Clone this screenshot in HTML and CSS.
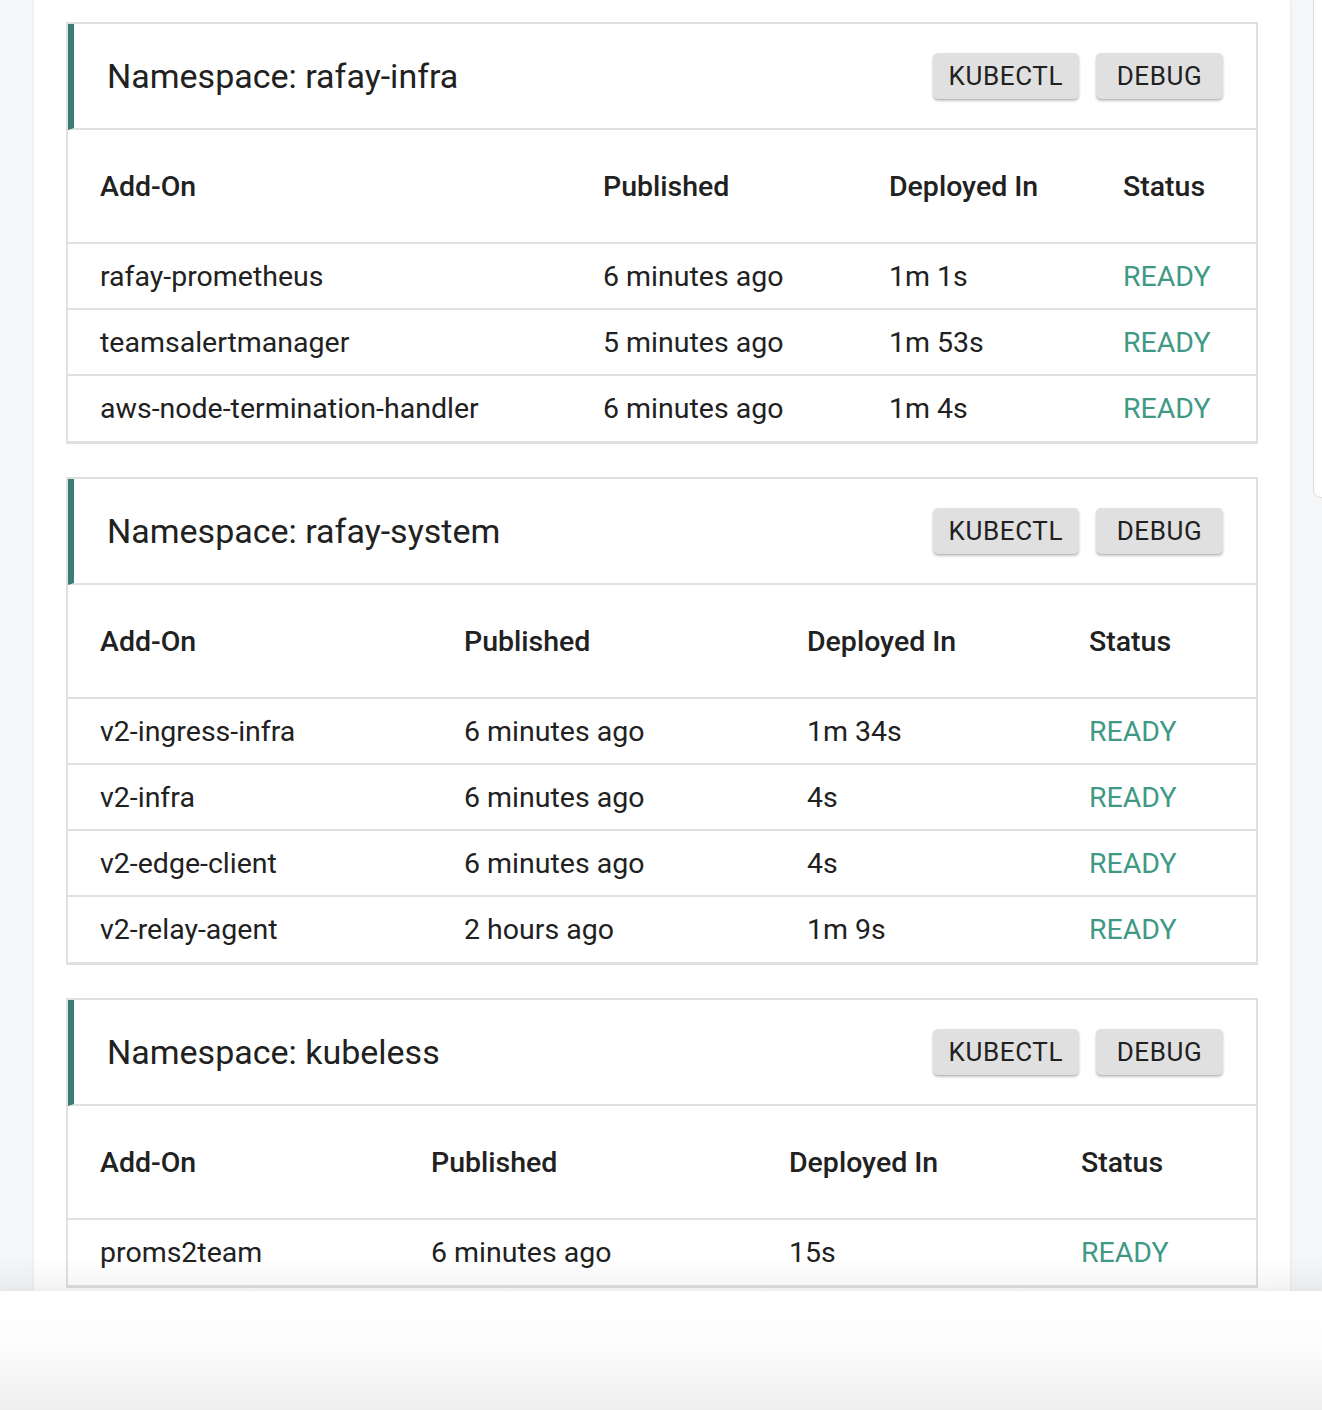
FILE: index.html
```html
<!DOCTYPE html>
<html lang="en">
<head>
<meta charset="utf-8">
<title>Add-Ons by Namespace</title>
<link rel="stylesheet" href="styles.css">
</head>
<body>
<div class="screen">
  <div class="viewport">
    <div class="side-popup"></div>
    <main class="panel">

      <section class="ns-card">
        <header class="ns-head">
          <h2 class="ns-title">Namespace: rafay-infra</h2>
          <div class="ns-actions">
            <button class="btn">KUBECTL</button>
            <button class="btn">DEBUG</button>
          </div>
        </header>
        <table class="addons t-infra">
          <colgroup><col class="c1"><col class="c2"><col class="c3"><col class="c4"></colgroup>
          <thead>
            <tr><th>Add-On</th><th>Published</th><th>Deployed In</th><th>Status</th></tr>
          </thead>
          <tbody>
            <tr><td>rafay-prometheus</td><td>6 minutes ago</td><td>1m 1s</td><td class="ready">READY</td></tr>
            <tr><td>teamsalertmanager</td><td>5 minutes ago</td><td>1m 53s</td><td class="ready">READY</td></tr>
            <tr><td>aws-node-termination-handler</td><td>6 minutes ago</td><td>1m 4s</td><td class="ready">READY</td></tr>
          </tbody>
        </table>
      </section>

      <section class="ns-card">
        <header class="ns-head">
          <h2 class="ns-title">Namespace: rafay-system</h2>
          <div class="ns-actions">
            <button class="btn">KUBECTL</button>
            <button class="btn">DEBUG</button>
          </div>
        </header>
        <table class="addons t-system">
          <colgroup><col class="c1"><col class="c2"><col class="c3"><col class="c4"></colgroup>
          <thead>
            <tr><th>Add-On</th><th>Published</th><th>Deployed In</th><th>Status</th></tr>
          </thead>
          <tbody>
            <tr><td>v2-ingress-infra</td><td>6 minutes ago</td><td>1m 34s</td><td class="ready">READY</td></tr>
            <tr><td>v2-infra</td><td>6 minutes ago</td><td>4s</td><td class="ready">READY</td></tr>
            <tr><td>v2-edge-client</td><td>6 minutes ago</td><td>4s</td><td class="ready">READY</td></tr>
            <tr><td>v2-relay-agent</td><td>2 hours ago</td><td>1m 9s</td><td class="ready">READY</td></tr>
          </tbody>
        </table>
      </section>

      <section class="ns-card">
        <header class="ns-head">
          <h2 class="ns-title">Namespace: kubeless</h2>
          <div class="ns-actions">
            <button class="btn">KUBECTL</button>
            <button class="btn">DEBUG</button>
          </div>
        </header>
        <table class="addons t-kubeless">
          <colgroup><col class="c1"><col class="c2"><col class="c3"><col class="c4"></colgroup>
          <thead>
            <tr><th>Add-On</th><th>Published</th><th>Deployed In</th><th>Status</th></tr>
          </thead>
          <tbody>
            <tr><td>proms2team</td><td>6 minutes ago</td><td>15s</td><td class="ready">READY</td></tr>
          </tbody>
        </table>
      </section>

    </main>
  </div>
  <div class="bottom-sheet"></div>
</div>
</body>
</html>
```

FILE: styles.css
```css
* { box-sizing: border-box; }

html, body {
  margin: 0;
  padding: 0;
  background: #ffffff;
}

body {
  font-family: Roboto, "Liberation Sans", Arial, sans-serif;
  color: #212121;
}

.screen {
  width: 1322px;
  height: 1410px;
  display: flex;
  flex-direction: column;
  overflow: hidden;
}

.viewport {
  position: relative;
  height: 1291px;
  flex: 0 0 1291px;
  background: #f5f6f8;
  padding: 0 32px 0 34px;
  overflow: hidden;
}

.viewport::after {
  content: "";
  position: absolute;
  left: 0;
  right: 0;
  bottom: 0;
  height: 34px;
  background: linear-gradient(to bottom, rgba(0,0,0,0), rgba(0,0,0,0.045));
  pointer-events: none;
}

.side-popup {
  position: absolute;
  top: -10px;
  left: 1313px;
  width: 40px;
  height: 508px;
  background: #ffffff;
  border: 1px solid #dcdcdc;
  border-radius: 0 0 0 8px;
}

.panel {
  background: #ffffff;
  height: 100%;
  padding: 22px 32px 0 32px;
  box-shadow: 0 0 3px rgba(0,0,0,0.10);
  display: flex;
  flex-direction: column;
  gap: 33px;
}

.ns-card {
  border: 2px solid #e0e0e0;
  border-bottom-width: 3px;
  background: #ffffff;
}

.ns-head {
  display: flex;
  align-items: center;
  justify-content: space-between;
  height: 106px;
  border-left: 6px solid #3a7d78;
  border-bottom: 2px solid #e0e0e0;
  padding: 0 33px 0 33px;
}

.ns-title {
  margin: 0;
  font-size: 34px;
  font-weight: 400;
  color: #212121;
}

.ns-actions {
  display: flex;
  gap: 17px;
}

.btn {
  font-family: Roboto, "Liberation Sans", Arial, sans-serif;
  font-size: 26px;
  font-weight: 400;
  letter-spacing: 0.6px;
  color: #212121;
  background: #e0e0e0;
  border: none;
  border-radius: 5px;
  height: 46px;
  min-width: 127px;
  padding: 0 16px;
  box-shadow: 0 2px 3px rgba(0,0,0,0.22), 0 1px 1px rgba(0,0,0,0.10);
  cursor: pointer;
}

.addons {
  width: 100%;
  border-collapse: collapse;
  table-layout: fixed;
  font-size: 28.5px;
}

.addons th,
.addons td {
  text-align: left;
  padding: 0 8px 0 32px;
  white-space: nowrap;
  vertical-align: middle;
}

.addons th {
  height: 113px;
  font-weight: 500;
  color: #212121;
}

.addons td {
  height: 66px;
  font-weight: 400;
  color: #212121;
}

.addons thead tr,
.addons tbody tr {
  border-bottom: 2px solid #e0e0e0;
}

.addons tbody tr:last-child {
  border-bottom: none;
}

.addons td.ready {
  color: #3f9985;
}

.t-infra .c1 { width: 503px; }
.t-infra .c2 { width: 286px; }
.t-infra .c3 { width: 234px; }
.t-infra .c4 { width: 165px; }

.t-system .c1 { width: 364px; }
.t-system .c2 { width: 343px; }
.t-system .c3 { width: 282px; }
.t-system .c4 { width: 199px; }

.t-kubeless .c1 { width: 331px; }
.t-kubeless .c2 { width: 358px; }
.t-kubeless .c3 { width: 292px; }
.t-kubeless .c4 { width: 207px; }

.bottom-sheet {
  flex: 1 1 auto;
  background: linear-gradient(to bottom, #ffffff 0%, #fdfdfd 45%, #efefef 100%);
  box-shadow: 0 -2px 6px rgba(0,0,0,0.03);
  position: relative;
}
```
